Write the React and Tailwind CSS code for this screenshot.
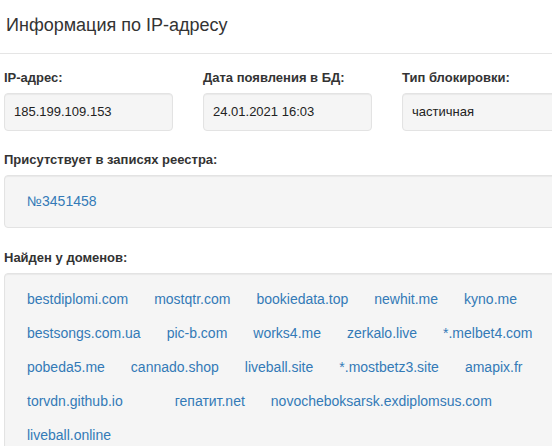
import React from 'react';

const domains = [
  'bestdiplomi.com', 'mostqtr.com', 'bookiedata.top', 'newhit.me', 'kyno.me',
  'bestsongs.com.ua', 'pic-b.com', 'works4.me', 'zerkalo.live', '*.melbet4.com',
  'pobeda5.me', 'cannado.shop', 'liveball.site', '*.mostbetz3.site', 'amapix.fr',
  'torvdn.github.io', '', 'гепатит.net', 'novocheboksarsk.exdiplomsus.com',
  'liveball.online',
];

const fields = [
  { label: 'IP-адрес:', value: '185.199.109.153' },
  { label: 'Дата появления в БД:', value: '24.01.2021 16:03' },
  { label: 'Тип блокировки:', value: 'частичная' },
];

const Well = ({ className = '', children }) => (
  <div className={`bg-[#f5f5f5] border border-[#e3e3e3] rounded-[4px] shadow-[inset_0_1px_1px_rgba(0,0,0,0.05)] ${className}`}>
    {children}
  </div>
);

const App = () => {
  return (
    <div className="w-[552px] h-[446px] overflow-hidden bg-white text-[#333] font-['Liberation_Sans',Arial,sans-serif]">
      <div className="w-[600px]">
        <div className="h-[54px] border-b border-[#e5e5e5] flex items-center pl-[6px] text-[18px] pb-[3px]">
          Информация по IP-адресу
        </div>

        <div className="pl-[4px] w-[571px]">
          <div className="grid grid-cols-[169px_169px_169px] gap-x-[30px] pt-[15px]">
            {fields.map((f) => (
              <div key={f.label}>
                <div className="text-[13px] font-bold leading-[18px] mb-[6px]">{f.label}</div>
                <Well className="h-[38px] px-[9px] flex items-center text-[13px] text-[#222]">
                  {f.value}
                </Well>
              </div>
            ))}
          </div>

          <div className="text-[13px] font-bold leading-[18px] mt-[20px] mb-[6px]">
            Присутствует в записях реестра:
          </div>
          <Well className="pt-[15px] pb-[16px] pl-[22px] text-[14px] leading-[20px]">
            <a className="text-[#337ab7]">№3451458</a>
          </Well>

          <div className="text-[13px] font-bold leading-[18px] mt-[21px] mb-[6px]">
            Найден у доменов:
          </div>
          <Well className="pt-[15px] pb-[16px] pl-[22px] pr-[20px] text-[14px] leading-[20px]">
            <div className="flex flex-wrap gap-x-[26px] gap-y-[14px]">
              {domains.map((d, i) => (
                <a key={i} className="text-[#337ab7] whitespace-nowrap">{d}</a>
              ))}
            </div>
          </Well>
        </div>
      </div>
    </div>
  );
};

export default App;
